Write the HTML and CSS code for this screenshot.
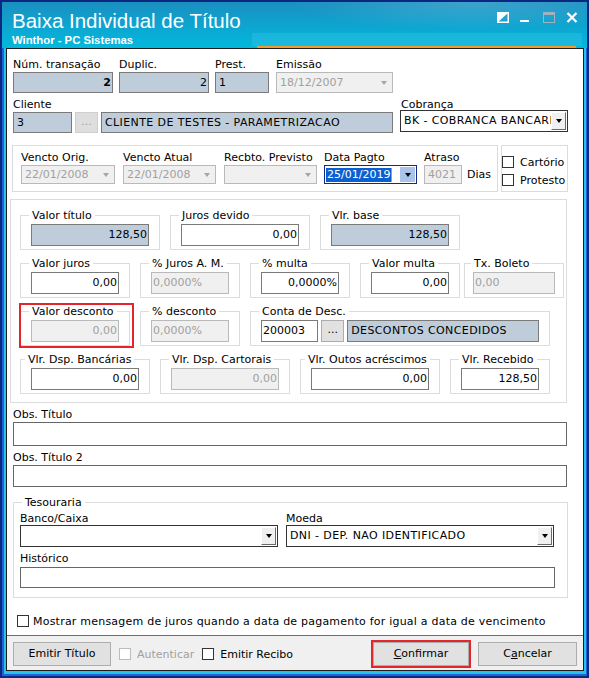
FILE: index.html
```html
<!DOCTYPE html>
<html lang="pt-BR">

<head>
  <meta charset="UTF-8">
  <meta name="viewport" content="width=device-width, initial-scale=1.0">
  <title>Baixa Individual de Título</title>
  <link rel="stylesheet" href="styles.css">
</head>

<body>
  <div class="window">
    <div class="titlebar">
      <div class="titles">
        <div class="title">Baixa Individual de Título</div>
        <div class="subtitle">Winthor - PC Sistemas</div>
      </div>
      <div class="caption">
        <svg width="12" height="11" viewBox="0 0 12 11">
          <rect x="0.75" y="0.75" width="10.5" height="9.5" fill="none" stroke="#fff" stroke-width="1.5" />
          <polygon points="0,0 12,0 0,11" fill="#fff" />
        </svg>
        <svg width="12" height="11" viewBox="0 0 12 11">
          <rect x="0" y="8" width="9" height="2" fill="#fff" />
        </svg>
        <svg width="12" height="11" viewBox="0 0 12 11">
          <rect x="0.5" y="0.5" width="11" height="10" fill="none" stroke="#9fb2c0" />
          <rect x="0" y="0" width="12" height="3" fill="#9fb2c0" />
        </svg>
        <svg width="12" height="11" viewBox="0 0 12 11">
          <path d="M1.5 1 L10.5 10 M10.5 1 L1.5 10" stroke="#fff" stroke-width="2.2" />
        </svg>
      </div>
    </div>

    <div class="client">
      <div class="form">
        <!-- cabecalho do titulo -->
        <div class="r1">
          <div class="fld f-trans">
            <span class="lbl">Núm. transação</span>
            <div class="inp ro num"><b>2</b></div>
          </div>
          <div class="fld f-duplic">
            <span class="lbl">Duplic.</span>
            <div class="inp ro num">2</div>
          </div>
          <div class="fld f-prest">
            <span class="lbl">Prest.</span>
            <div class="inp ro">1</div>
          </div>
          <div class="fld f-emissao">
            <span class="lbl">Emissão</span>
            <div class="inp dis combo"><span class="txt">18/12/2007</span><span class="arr"></span></div>
          </div>
        </div>

        <div class="r2">
          <div class="fld">
            <span class="lbl">Cliente</span>
            <div class="line">
              <div class="inp ro f-codcli">3</div>
              <div class="dots off">...</div>
              <div class="inp ro caps f-nomecli">CLIENTE DE TESTES - PARAMETRIZACAO</div>
            </div>
          </div>
          <div class="fld f-cobranca">
            <span class="lbl">Cobrança</span>
            <div class="cbox big caps"><span class="txt">BK - COBRANCA BANCARIA</span><span class="cbtn"></span></div>
          </div>
        </div>

        <!-- datas -->
        <div class="r3">
          <div class="box datas">
            <div class="fld f-d1">
              <span class="lbl">Vencto Orig.</span>
              <div class="inp dis combo h19"><span class="txt">22/01/2008</span><span class="arr"></span></div>
            </div>
            <div class="fld f-d2">
              <span class="lbl">Vencto Atual</span>
              <div class="inp dis combo h19"><span class="txt">22/01/2008</span><span class="arr"></span></div>
            </div>
            <div class="fld f-d3">
              <span class="lbl">Recbto. Previsto</span>
              <div class="inp dis combo h19"><span class="txt"></span><span class="arr"></span></div>
            </div>
            <div class="fld f-d4">
              <span class="lbl">Data Pagto</span>
              <div class="inp combo h19 sel"><span class="txt"><span class="hi">25/01/2019</span><span class="caret"></span></span><span class="cbtn blue"></span></div>
            </div>
            <div class="fld f-atraso">
              <span class="lbl">Atraso</span>
              <div class="inp dis h19">4021</div>
            </div>
            <span class="dias">Dias</span>
          </div>
          <div class="box opcoes">
            <div class="chk"><span class="cb"></span>Cartório</div>
            <div class="chk"><span class="cb"></span>Protesto</div>
          </div>
        </div>

        <!-- valores -->
        <div class="box valores">
          <div class="vrow">
            <div class="grp g140">
              <span class="cap">Valor título</span>
              <div class="inp ro num h22">128,50</div>
            </div>
            <div class="grp g140">
              <span class="cap">Juros devido</span>
              <div class="inp num h22">0,00</div>
            </div>
            <div class="grp g140">
              <span class="cap">Vlr. base</span>
              <div class="inp ro num h22">128,50</div>
            </div>
          </div>

          <div class="vrow">
            <div class="grp g110">
              <span class="cap">Valor juros</span>
              <div class="inp num h22">0,00</div>
            </div>
            <div class="grp g100">
              <span class="cap">% Juros A. M.</span>
              <div class="inp dis h22 pl1">0,0000%</div>
            </div>
            <div class="grp g100">
              <span class="cap">% multa</span>
              <div class="inp num h22">0,0000%</div>
            </div>
            <div class="grp g100">
              <span class="cap">Valor multa</span>
              <div class="inp num h22">0,00</div>
            </div>
            <div class="grp g100 tx">
              <span class="cap">Tx. Boleto</span>
              <div class="inp dis h22 pl1">0,00</div>
            </div>
          </div>

          <div class="vrow">
            <div class="grp g110">
              <span class="cap">Valor desconto</span>
              <div class="inp dis num h22">0,00</div>
              <div class="hl"></div>
            </div>
            <div class="grp g100">
              <span class="cap">% desconto</span>
              <div class="inp dis h22 pl1">0,0000%</div>
            </div>
            <div class="grp g300">
              <span class="cap">Conta de Desc.</span>
              <div class="line">
                <div class="inp h22 f-conta">200003</div>
                <div class="dots h22">...</div>
                <div class="inp ro caps h22 f-nomeconta">DESCONTOS CONCEDIDOS</div>
              </div>
            </div>
          </div>

          <div class="vrow">
            <div class="grp g130">
              <span class="cap near">Vlr. Dsp. Bancárias</span>
              <div class="inp num h22">0,00</div>
            </div>
            <div class="grp g130">
              <span class="cap">Vlr. Dsp. Cartorais</span>
              <div class="inp dis num h22">0,00</div>
            </div>
            <div class="grp g140">
              <span class="cap near">Vlr. Outos acréscimos</span>
              <div class="inp num h22">0,00</div>
            </div>
            <div class="grp g100">
              <span class="cap">Vlr. Recebido</span>
              <div class="inp num h22">128,50</div>
            </div>
          </div>
        </div>

        <!-- observacoes -->
        <div class="obs">
          <span class="lbl o1">Obs. Título</span>
          <div class="inp dark h24"></div>
          <span class="lbl o2">Obs. Título 2</span>
          <div class="inp dark h22"></div>
        </div>

        <!-- tesouraria -->
        <div class="box tes">
          <span class="cap">Tesouraria</span>
          <div class="line">
            <div class="fld f-banco">
              <span class="lbl">Banco/Caixa</span>
              <div class="cbox"><span class="txt"></span><span class="cbtn"></span></div>
            </div>
            <div class="fld f-moeda">
              <span class="lbl">Moeda</span>
              <div class="cbox caps"><span class="txt">DNI - DEP. NAO IDENTIFICADO</span><span class="cbtn"></span></div>
            </div>
          </div>
          <span class="lbl hist">Histórico</span>
          <div class="inp dark f-hist"></div>
        </div>

        <div class="chk msg"><span class="cb"></span>Mostrar mensagem de juros quando a data de pagamento for igual a data de vencimento</div>
      </div>

      <div class="bar">
        <div class="btn b-emitir">Emitir Título</div>
        <div class="chk off b-aut"><span class="cb"></span>Autenticar</div>
        <div class="chk b-rec"><span class="cb"></span>Emitir Recibo</div>
        <div class="btn b-conf"><u>C</u>onfirmar</div>
        <div class="btn b-canc">C<u>a</u>ncelar</div>
      </div>
    </div>
  </div>
</body>

</html>
```

FILE: styles.css
```css
* {
  margin: 0;
  padding: 0;
  box-sizing: border-box;
}

body {
  font-family: "DejaVu Sans", Verdana, sans-serif;
  font-size: 11px;
  color: #000;
  background: #fff;
}

/* moldura da janela */
.window {
  width: 589px;
  height: 678px;
  border: 2px solid #0b2780;
  background: #25c3ec;
  padding: 0 3px 5px 4px;
  display: flex;
  flex-direction: column;
  box-shadow: inset 2px 0 0 #1f62d8, inset -1px 0 0 #1f62d8, inset 0 -2px 0 #1f62d8;
}

.titlebar {
  height: 46px;
  margin: 0 -3px 0 -4px;
  padding: 0 9px 0 10px;
  display: flex;
  color: #fff;
  background:
    linear-gradient(#f39a2d, #f39a2d) 255px 44px / 319px 2px no-repeat,
    linear-gradient(rgba(140, 225, 245, 0.14), rgba(140, 225, 245, 0.14)) 250px 31px / 330px 13px no-repeat,
    radial-gradient(ellipse 260px 40px at 470px 0, rgba(255, 255, 255, 0.16), rgba(255, 255, 255, 0) 70%),
    linear-gradient(180deg, #1a8fc0 0%, #10a0cd 40%, #02b9dd 100%);
}

.titles {
  flex: 1;
  padding-top: 7px;
}

.title {
  font: 20.5px/24px "Liberation Sans", Arial, sans-serif;
}

.subtitle {
  margin-top: 1px;
  font: bold 11.3px/13px "Liberation Sans", Arial, sans-serif;
}

.caption {
  display: flex;
  gap: 11px;
  margin-top: 10px;
  height: 11px;
}

.client {
  flex: 1;
  border: 1px solid #1e1e1e;
  background: #fff;
  display: flex;
  flex-direction: column;
}

.form {
  height: 586px;
}

/* campos */
.fld {
  display: flex;
  flex-direction: column;
}

.lbl {
  display: block;
  height: 13px;
  line-height: 13px;
  white-space: nowrap;
}

.fld .lbl + * {
  margin-top: 1px;
}

.line {
  display: flex;
}

.inp {
  height: 21px;
  line-height: 19px;
  border: 1px solid #7a7a7a;
  background: #fff;
  padding: 0 1px 0 3px;
  white-space: nowrap;
  overflow: hidden;
}

.ro {
  background: #bfcddb;
}

.dis {
  background: #f0f0f0;
  border-color: #b9b9b9;
  color: #a0a0a0;
}

.num {
  text-align: right;
}

.caps {
  letter-spacing: 0.4px;
}

.pl1 {
  padding-left: 1px;
}

.dark {
  border-color: #666;
}

.h19 {
  height: 19px;
  line-height: 17px;
}

.h22 {
  height: 22px;
  line-height: 20px;
}

.h24 {
  height: 24px;
  line-height: 22px;
}

.combo {
  display: flex;
  align-items: center;
  padding-right: 0;
}

.combo .txt {
  flex: 1;
  overflow: hidden;
}

.arr {
  width: 16px;
  display: flex;
  justify-content: center;
}

.arr::after,
.cbtn::after {
  content: "";
  border-left: 3.5px solid transparent;
  border-right: 3.5px solid transparent;
  border-top: 4px solid #a6a6a6;
}

.cbox {
  height: 24px;
  border: 1px solid #333;
  background: #fff;
  display: flex;
  align-items: center;
  padding: 0 1px 0 3px;
  line-height: 20px;
}

.cbox .txt {
  flex: 1;
  white-space: nowrap;
  overflow: hidden;
}

.cbtn {
  width: 15px;
  height: 20px;
  flex-shrink: 0;
  background: #f0f0f0;
  border: 1px solid;
  border-color: #fff #6b6b6b #6b6b6b #fff;
  display: flex;
  align-items: center;
  justify-content: center;
}

.cbtn::after {
  border-top-color: #000;
}

.sel {
  border-color: #142a86;
  padding-left: 1px;
}

.sel .txt {
  display: flex;
  align-items: center;
}

.hi {
  background: #0a60d0;
  color: #fff;
  line-height: 14px;
  padding: 0 1px;
}

.caret {
  width: 1px;
  height: 14px;
  background: #f08a20;
}

.sel .cbtn {
  width: 15px;
  height: 15px;
  margin-right: 1px;
  background: #a9c3ea;
  border: none;
}

.dots {
  width: 23px;
  height: 21px;
  margin: 0 3px;
  border: 1px solid #adadad;
  background: #e1e1e1;
  text-align: center;
  line-height: 17px;
}

.dots.off {
  border-color: #cfcfcf;
  background: #dedede;
  color: #a0a0a0;
}

/* linha 1 e 2 */
.r1 {
  display: flex;
  margin: 9px 0 0 6px;
}

.f-trans { width: 100px; }
.f-duplic { width: 90px; margin-left: 6px; }
.f-prest { width: 54px; margin-left: 6px; }
.f-emissao { width: 117px; margin-left: 7px; }

.r2 {
  display: flex;
  align-items: flex-start;
  margin: 5px 0 0 6px;
}

.f-codcli { width: 59px; }
.f-nomecli { width: 292px; }

.f-cobranca {
  width: 168px;
  margin-left: 7px;
}

.f-cobranca .lbl {
  padding-left: 1px;
}

.fld .lbl + .cbox.big {
  margin-top: -1px;
}

/* datas */
.box {
  border: 1px solid #dcdcdc;
}

.r3 {
  display: flex;
  margin: 12px 0 0 5px;
}

.datas {
  width: 486px;
  height: 47px;
  padding: 5px 0 0 8px;
  display: flex;
  align-items: flex-start;
}

.f-d1 { width: 94px; }
.f-d2 { width: 93px; margin-left: 8px; }
.f-d3 { width: 93px; margin-left: 8px; }
.f-d4 { width: 93px; margin-left: 7px; }
.f-atraso { width: 38px; margin-left: 7px; }

.dias {
  margin: 17px 0 0 5px;
  line-height: 13px;
}

.opcoes {
  width: 67px;
  height: 47px;
  margin-left: 3px;
  padding-top: 7px;
}

.chk {
  display: flex;
  align-items: center;
  height: 18px;
  white-space: nowrap;
}

.cb {
  width: 12px;
  height: 12px;
  border: 1px solid #333;
  background: #fff;
  margin-right: 6px;
}

/* valores */
.valores {
  width: 557px;
  height: 204px;
  margin: 7px 0 0 3px;
  padding: 15px 0 0 9px;
  display: flex;
  flex-direction: column;
  gap: 13px;
}

.vrow {
  display: flex;
  gap: 10px;
}

.grp {
  position: relative;
  border: 1px solid #dcdcdc;
  padding: 0 10px 3px;
}

.cap {
  display: block;
  width: max-content;
  height: 13px;
  line-height: 13px;
  margin: -7px 0 2px -2px;
  padding: 0 3px;
  background: #fff;
}

.cap.near {
  margin-left: -6px;
}

.g100 { width: 100px; }
.g110 { width: 110px; }
.g130 { width: 130px; }
.g140 { width: 140px; }
.g300 { width: 300px; }

.grp.tx {
  margin-left: -6px;
  padding: 0 8px 3px;
}

.grp .line .dots {
  height: 22px;
  line-height: 18px;
}

.f-conta {
  width: 58px;
  padding-left: 1px;
}

.f-nomeconta {
  width: 194px;
}

.hl {
  position: absolute;
  left: -2px;
  top: -9px;
  width: 115px;
  height: 45px;
  border: 2px solid #e3262b;
}

/* observacoes */
.obs {
  width: 554px;
  margin-left: 6px;
}

.obs .lbl.o1 { margin: 5px 0 1px; }
.obs .lbl.o2 { margin: 5px 0 1px; }

/* tesouraria */
.tes {
  width: 555px;
  margin: 15px 0 0 6px;
  padding: 0 12px 9px 6px;
}

.tes > .cap {
  margin: -7px 0 3px 2px;
}

.f-banco { width: 258px; }
.f-moeda { width: 268px; margin-left: 8px; }

.fld .lbl + .cbox {
  margin-top: 0;
  height: 22px;
}

.fld .lbl + .cbox .cbtn {
  height: 18px;
}

.lbl.hist {
  margin: 5px 0 2px;
}

.f-hist {
  width: 535px;
}

.msg {
  margin: 16px 0 0 10px;
  height: 14px;
  letter-spacing: 0.22px;
}

.msg .cb {
  margin-right: 4px;
}

/* barra de botoes */
.bar {
  flex: 1;
  border-top: 1px solid #6e6e6e;
  background: #f0f0f0;
  display: flex;
  align-items: flex-start;
  padding: 6px 6px 0 6px;
}

.btn {
  height: 24px;
  border: 1px solid #adadad;
  background: #e1e1e1;
  text-align: center;
  line-height: 22px;
}

.bar .chk {
  height: 24px;
}

.b-emitir { width: 98px; }
.b-aut { margin-left: 8px; color: #a0a0a0; }
.b-aut .cb { border-color: #bcbcbc; }
.b-rec { margin-left: 8px; }

.b-conf {
  width: 96px;
  margin-left: auto;
  outline: 2px solid #e3262b;
}

.b-canc {
  width: 99px;
  margin-left: 9px;
}
```
